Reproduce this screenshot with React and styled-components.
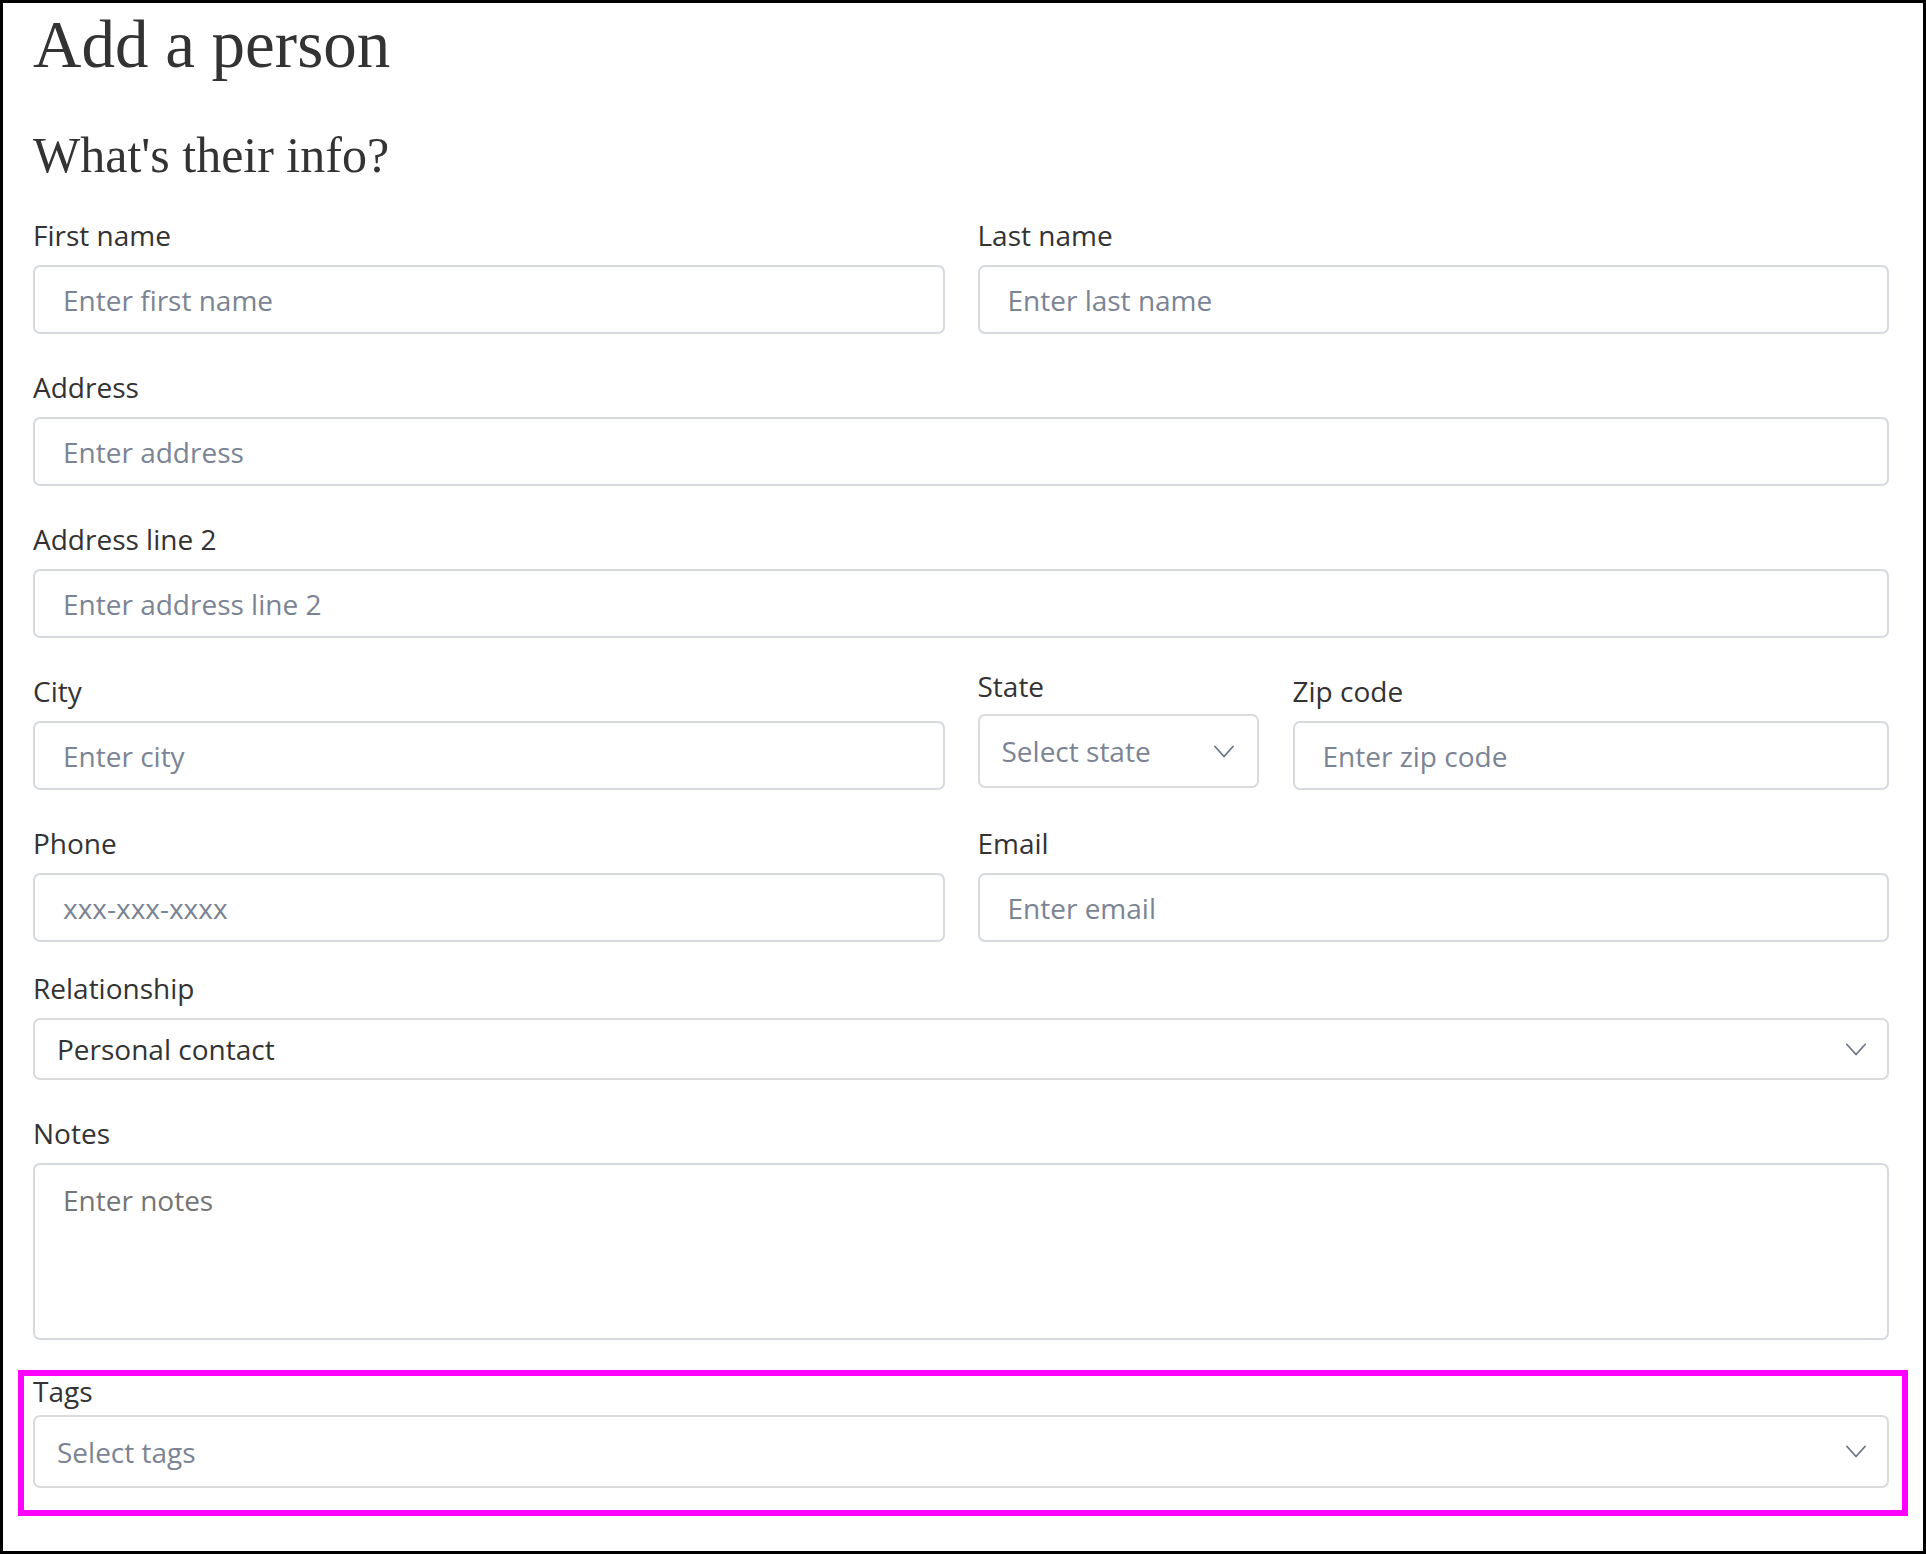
import React from "react";
import styled, { createGlobalStyle } from "styled-components";

const GlobalStyle = createGlobalStyle`
  * {
    box-sizing: border-box;
  }
  html,
  body {
    margin: 0;
    padding: 0;
    background: #fff;
  }
  body {
    font-family: "Open Sans", "Noto Sans", sans-serif;
    color: #333;
  }
`;

const Page = styled.div`
  min-height: 100vh;
  border: 3px solid #000;
  padding: 0 34px 0 30px;
  background: #fff;
`;

const Title = styled.h1`
  margin: 0;
  font-family: "Liberation Serif", serif;
  font-weight: 400;
  font-size: 67px;
  line-height: 82px;
  color: #333;
`;

const Subtitle = styled.h2`
  margin: 41px 0 0;
  font-family: "Liberation Serif", serif;
  font-weight: 400;
  font-size: 50px;
  line-height: 58px;
  color: #333;
`;

const Form = styled.form`
  display: flex;
  flex-direction: column;
  gap: 32px;
  margin-top: 30px;
`;

const Row = styled.div`
  display: grid;
  grid-template-columns: 1fr 1fr;
  column-gap: 33px;
  align-items: start;
`;

const SubRow = styled.div`
  display: grid;
  grid-template-columns: 281px 1fr;
  column-gap: 34px;
  align-items: start;
`;

const Field = styled.div`
  display: flex;
  flex-direction: column;
  margin-top: ${(props) => props.$shift || 0}px;
`;

const Label = styled.label`
  font-size: 28px;
  line-height: ${(props) => (props.$tight ? "30px" : "42px")};
  margin-bottom: ${(props) => props.$gap ?? 9}px;
  color: #333;
`;

const Input = styled.input`
  width: 100%;
  height: 69px;
  border: 2px solid #d6d9de;
  border-radius: 7px;
  padding: 0 28px;
  font-family: inherit;
  font-size: 28px;
  color: #333;
  background: #fff;
  outline: none;
  &::placeholder {
    color: #7b8494;
    opacity: 1;
  }
`;

const TextArea = styled.textarea`
  display: block;
  width: 100%;
  height: 177px;
  border: 2px solid #d6d9de;
  border-radius: 7px;
  padding: 14px 28px;
  font-family: inherit;
  font-size: 28px;
  line-height: 42px;
  color: #333;
  background: #fff;
  resize: none;
  outline: none;
  &::placeholder {
    color: #757575;
    opacity: 1;
  }
`;

const SelectBox = styled.div`
  height: ${(props) => props.$h}px;
  display: flex;
  align-items: center;
  justify-content: space-between;
  border: 2px solid #dadada;
  border-radius: 7px;
  padding: 0 ${(props) => props.$pr ?? 21}px 0 22px;
  font-size: 28px;
  color: ${(props) => (props.$placeholder ? "#7b8494" : "#333")};
  background: #fff;
`;

const Highlight = styled.div`
  margin: -2px -19px 0 -15px;
  border: 6px solid #ff00ff;
  padding: 0 13px 22px 9px;
`;

const Chevron = () => (
  <svg width="20" height="13" viewBox="0 0 20 13" fill="none">
    <polyline
      points="1,1.5 10,11.5 19,1.5"
      stroke="#6b7586"
      strokeWidth="1.8"
      strokeLinecap="round"
      strokeLinejoin="round"
    />
  </svg>
);

const Select = ({ value, placeholder, height, pr }) => (
  <SelectBox $h={height} $pr={pr} $placeholder={!value}>
    <span>{value || placeholder}</span>
    <Chevron />
  </SelectBox>
);

const TextField = ({ label, placeholder }) => (
  <Field>
    <Label>{label}</Label>
    <Input placeholder={placeholder} />
  </Field>
);

const App = () => {
  return (
    <Page>
      <GlobalStyle />
      <Title>Add a person</Title>
      <Subtitle>What's their info?</Subtitle>
      <Form onSubmit={(e) => e.preventDefault()}>
        <Row>
          <TextField label="First name" placeholder="Enter first name" />
          <TextField label="Last name" placeholder="Enter last name" />
        </Row>
        <TextField label="Address" placeholder="Enter address" />
        <TextField label="Address line 2" placeholder="Enter address line 2" />
        <Row>
          <TextField label="City" placeholder="Enter city" />
          <SubRow>
            <Field $shift={-5}>
              <Label $gap={7}>State</Label>
              <Select placeholder="Select state" height={74} pr={23} />
            </Field>
            <TextField label="Zip code" placeholder="Enter zip code" />
          </SubRow>
        </Row>
        <Row>
          <TextField label="Phone" placeholder="xxx-xxx-xxxx" />
          <TextField label="Email" placeholder="Enter email" />
        </Row>
        <Field $shift={-7}>
          <Label>Relationship</Label>
          <Select value="Personal contact" height={62} />
        </Field>
        <Field>
          <Label>Notes</Label>
          <TextArea placeholder="Enter notes" />
        </Field>
        <Highlight>
          <Field>
            <Label $tight>Tags</Label>
            <Select placeholder="Select tags" height={73} />
          </Field>
        </Highlight>
      </Form>
    </Page>
  );
};

export default App;
